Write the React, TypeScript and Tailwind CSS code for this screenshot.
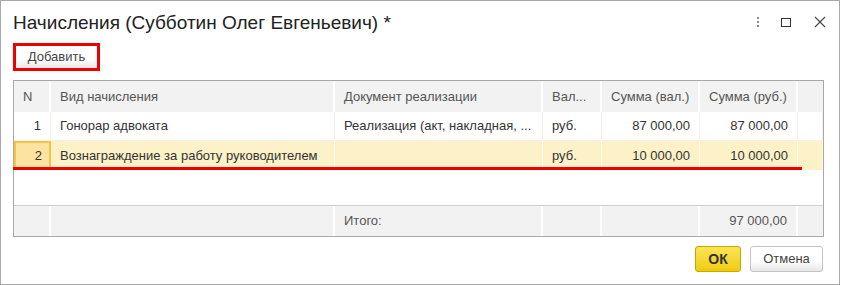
import React from "react";

const cols = [
  { w: "w-[37px]", right: true },
  { w: "w-[284px]", right: false },
  { w: "w-[208px]", right: false },
  { w: "w-[59px]", right: false },
  { w: "w-[98px]", right: true },
  { w: "w-[98px]", right: true },
  { w: "flex-1", right: false },
];

const header = ["N", "Вид начисления", "Документ реализации", "Вал...", "Сумма (вал.)", "Сумма (руб.)", ""];

const rows = [
  ["1", "Гонорар адвоката", "Реализация (акт, накладная, ...", "руб.", "87 000,00", "87 000,00", ""],
  ["2", "Вознаграждение за работу руководителем", "", "руб.", "10 000,00", "10 000,00", ""],
];

const footer = ["", "", "Итого:", "", "", "97 000,00", ""];

export default function App() {
  return (
    <div
      className="w-[840px] h-[285px] border border-[#a8a8a8] bg-white text-[#333] relative"
      style={{ fontFamily: '"Liberation Sans", Arial, sans-serif' }}
    >
      {/* title bar */}
      <div className="flex items-center h-[42px] pl-[12px] pr-[10px]">
        <div className="text-[19px] text-[#222] flex-1 pt-[2px] whitespace-nowrap">Начисления (Субботин Олег Евгеньевич) *</div>
        <div className="flex items-center gap-[22px] mr-[3px]">
          <div className="flex flex-col gap-[2px]">
            <span className="w-[2px] h-[2px] bg-[#8a8a8a]" />
            <span className="w-[2px] h-[2px] bg-[#8a8a8a]" />
            <span className="w-[2px] h-[2px] bg-[#8a8a8a]" />
          </div>
          <div className="w-[10px] h-[9px] border border-[#333]" />
          <svg width="12" height="12" viewBox="0 0 12 12" className="ml-[1px]">
            <path d="M1 1 L11 11 M11 1 L1 11" stroke="#444" strokeWidth="1.1" />
          </svg>
        </div>
      </div>

      {/* toolbar */}
      <div className="pl-[12px] h-[37px]">
        <div className="inline-flex border-[3px] border-[#ee0000] w-[87px] h-[28px]">
          <div className="flex-1 flex items-center justify-center text-[13px] text-[#444] bg-gradient-to-b from-white from-60% to-[#e8e8e8]">
            Добавить
          </div>
        </div>
      </div>

      {/* table */}
      <div className="relative ml-[12px] w-[811px] h-[157px] border border-[#a8a8a8] flex flex-col text-[13px]">
        <div className="flex h-[31px] bg-[#f2f2f2] text-[#555]">
          {header.map((h, i) => (
            <div
              key={i}
              className={`${cols[i].w} flex items-center px-[9px] whitespace-nowrap border-r-2 border-white last:border-r-0`}
            >
              {h}
            </div>
          ))}
        </div>
        {rows.map((r, ri) => (
          <div
            key={ri}
            className={`flex h-[29px] ${ri === 1 ? "bg-[#fdf1c8]" : "bg-white border-b border-[#f0f0f0]"}`}
          >
            {r.map((c, i) => {
              const sel = ri === 1 && i === 0;
              const border = sel
                ? "bg-[#fce3a1] border-2 border-[#f6c443] pr-[7px]"
                : ri === 1
                ? "border-r border-[#fffbe9]"
                : "border-r border-[#f3f3f3]";
              return (
                <div
                  key={i}
                  className={`${cols[i].w} flex items-center whitespace-nowrap ${cols[i].right ? "justify-end" : ""} px-[9px] ${border}`}
                >
                  {c}
                </div>
              );
            })}
          </div>
        ))}
        <div className="flex-1" />
        <div className="flex h-[31px] bg-[#f2f2f2] text-[#555] border-t border-[#cfcfcf]">
          {footer.map((f, i) => (
            <div
              key={i}
              className={`${cols[i].w} flex items-center ${cols[i].right ? "justify-end" : ""} px-[9px] border-r-2 border-white last:border-r-0`}
            >
              {f}
            </div>
          ))}
        </div>
        <div className="absolute left-[-1px] top-[86px] w-[789px] h-[3px] bg-[#ee0000]" />
      </div>

      {/* footer buttons */}
      <div className="flex justify-end gap-[9px] pr-[16px] mt-[9px]">
        <div className="w-[46px] h-[26px] rounded-[3px] border border-[#c8a500] bg-gradient-to-b from-[#fbe552] to-[#efcb00] flex items-center justify-center text-[14px] font-bold text-[#333]">
          ОК
        </div>
        <div className="w-[73px] h-[26px] rounded-[3px] border border-[#c4c4c4] bg-gradient-to-b from-white from-60% to-[#e6e6e6] flex items-center justify-center text-[13px] text-[#444]">
          Отмена
        </div>
      </div>
    </div>
  );
}
